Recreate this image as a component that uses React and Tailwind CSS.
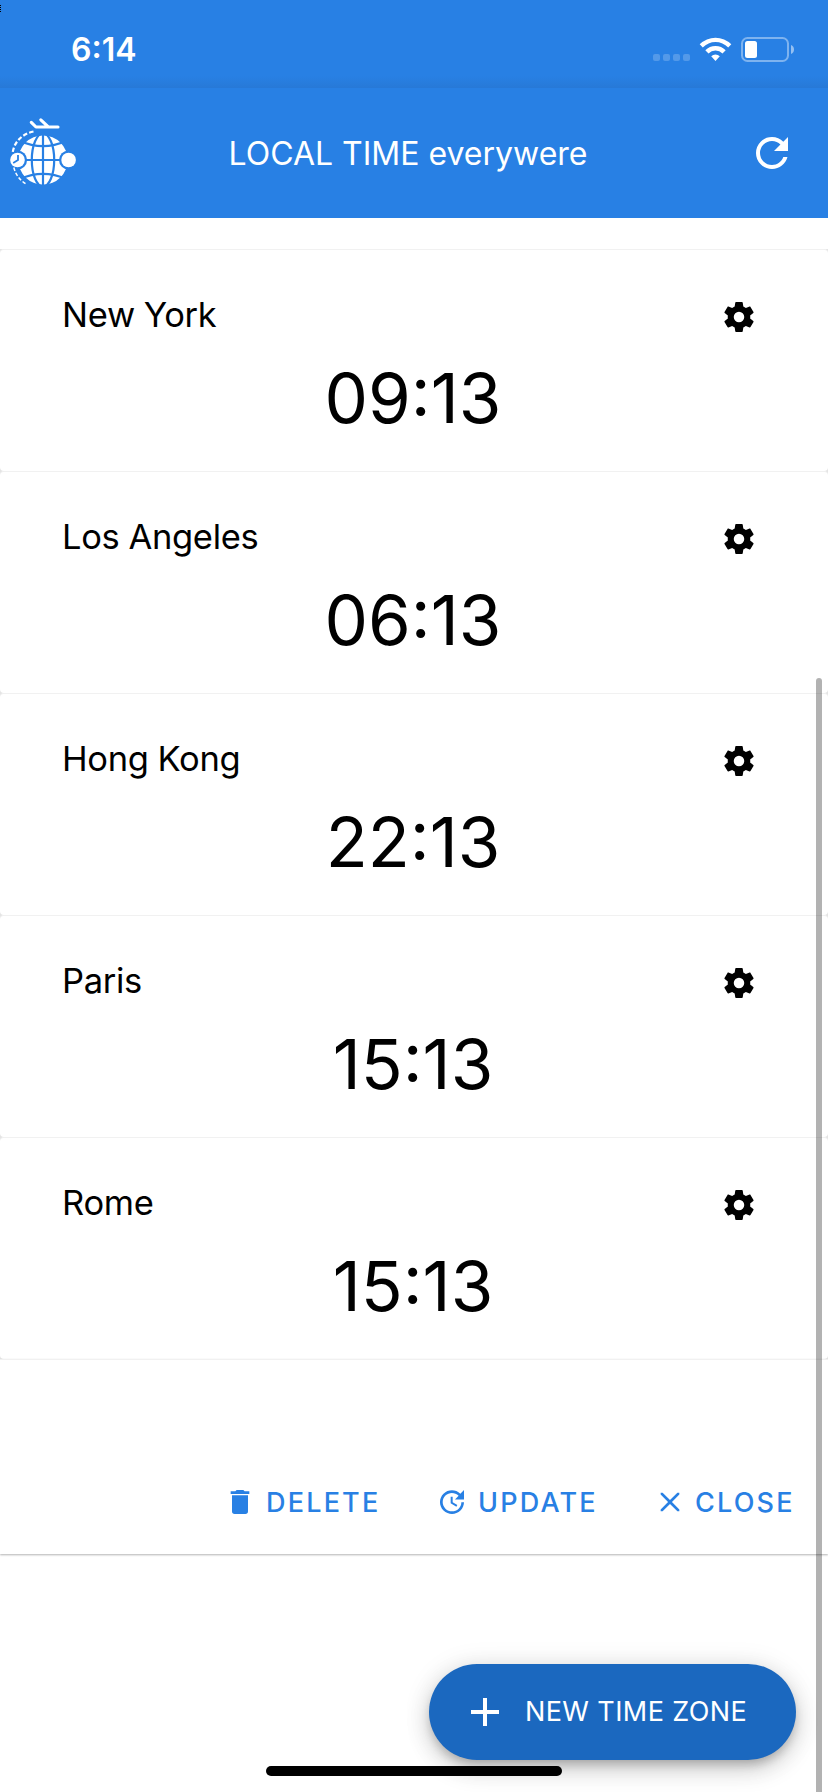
const ICONS = {
  cog: "M12,15.5A3.5,3.5 0 0,1 8.5,12A3.5,3.5 0 0,1 12,8.5A3.5,3.5 0 0,1 15.5,12A3.5,3.5 0 0,1 12,15.5M19.43,12.97C19.47,12.65 19.5,12.33 19.5,12C19.5,11.67 19.47,11.34 19.43,11L21.54,9.37C21.73,9.22 21.78,8.95 21.66,8.73L19.66,5.27C19.54,5.05 19.27,4.96 19.05,5.05L16.56,6.05C16.04,5.66 15.5,5.32 14.87,5.07L14.5,2.42C14.46,2.18 14.25,2 14,2H10C9.75,2 9.54,2.18 9.5,2.42L9.13,5.07C8.5,5.32 7.96,5.66 7.44,6.05L4.95,5.05C4.73,4.96 4.46,5.05 4.34,5.27L2.34,8.73C2.21,8.95 2.27,9.22 2.46,9.37L4.57,11C4.53,11.34 4.5,11.67 4.5,12C4.5,12.33 4.53,12.65 4.57,12.97L2.46,14.63C2.27,14.78 2.21,15.05 2.34,15.27L4.34,18.73C4.46,18.95 4.73,19.03 4.95,18.95L7.44,17.94C7.96,18.34 8.5,18.68 9.13,18.93L9.5,21.58C9.54,21.82 9.75,22 10,22H14C14.25,22 14.46,21.82 14.5,21.58L14.87,18.93C15.5,18.67 16.04,18.34 16.56,17.94L19.05,18.95C19.27,19.03 19.54,18.95 19.66,18.73L21.66,15.27C21.78,15.05 21.73,14.78 21.54,14.63L19.43,12.97Z",
  trash: "M19,4H15.5L14.5,3H9.5L8.5,4H5V6H19M6,19A2,2 0 0,0 8,21H16A2,2 0 0,0 18,19V7H6V19Z",
  update: "M21,10.12H14.22L16.96,7.3C14.23,4.6 9.81,4.5 7.08,7.2C4.35,9.91 4.35,14.28 7.08,17C9.81,19.7 14.23,19.7 16.96,17C18.32,15.65 19,14.08 19,12.1H21C21,14.08 20.12,16.65 18.36,18.39C14.85,21.87 9.15,21.87 5.64,18.39C2.14,14.92 2.11,9.28 5.62,5.81C9.13,2.34 14.76,2.34 18.27,5.81L21,3V10.12M12.5,8V12.25L16,14.33L15.28,15.54L11,13V8H12.5Z",
  close: "M13.46,12L19,17.54V19H17.54L12,13.46L6.46,19H5V17.54L10.54,12L5,6.46V5H6.46L12,10.54L17.54,5H19V6.46L13.46,12Z",
  plus: "M19,13H13V19H11V13H5V11H11V5H13V11H19V13Z",
  refresh: "M17.65,6.35C16.2,4.9 14.21,4 12,4A8,8 0 0,0 4,12A8,8 0 0,0 12,20C15.73,20 18.84,17.45 19.73,14H17.65C16.83,16.33 14.61,18 12,18A6,6 0 0,1 6,12A6,6 0 0,1 12,6C13.66,6 15.14,6.69 16.22,7.78L13,11H20V4L17.65,6.35Z",
};

function Icon({ name, className }) {
  return (
    <svg viewBox="0 0 24 24" fill="currentColor" className={className}>
      <path d={ICONS[name]} />
    </svg>
  );
}

function Logo() {
  return (
    <svg viewBox="8 117 70 72" className="h-[72px] w-[70px]" fill="none">
      <circle cx="43" cy="160" r="24.6" fill="white" />
      <g stroke="#2880e4" strokeWidth="2.2">
        <path d="M43 134V186M18 160H68" />
        <ellipse cx="43" cy="160" rx="11.2" ry="26.5" />
        <path d="M20 141Q43 151.4 66 141M20 179Q43 168.6 66 179" />
      </g>
      <g fill="#2880e4">
        <circle cx="17.5" cy="160" r="9.6" />
        <circle cx="68.6" cy="160" r="9.6" />
      </g>
      <circle cx="17.5" cy="160" r="7.3" fill="white" />
      <circle cx="68.6" cy="160" r="7.3" fill="white" />
      <path d="M18 155V160L13.2 163" stroke="#2880e4" strokeWidth="1.8" />
      <path d="M33.5 131.5C22 134 14 142 12.6 153" stroke="white" strokeWidth="2.2" strokeDasharray="4.4 2.2" />
      <path d="M13.8 167.5C15.6 174 19 179.5 25.5 183.6" stroke="white" strokeWidth="1.5" strokeDasharray="3.6 2" />
      <path d="M31.3 122.3L36 127H58M40.8 119.8L47.8 126.4" stroke="white" strokeWidth="3.1" strokeLinecap="round" strokeLinejoin="round" />
    </svg>
  );
}

function StatusIcons() {
  return (
    <svg viewBox="652 34 144 30" className="h-[30px] w-[144px]" fill="none">
      <g fill="white" fillOpacity="0.2">
        <rect x="653" y="54" width="7" height="7" rx="2" />
        <rect x="663" y="54" width="7" height="7" rx="2" />
        <rect x="673" y="54" width="7" height="7" rx="2" />
        <rect x="683" y="54" width="7" height="7" rx="2" />
      </g>
      <path
        fill="white"
        d="M699.7 44.3A22.2 22.2 0 0 1 731.3 44.3L728.2 47.4A17.8 17.8 0 0 0 702.8 47.4ZM705.3 50.2A14.2 14.2 0 0 1 725.7 50.2L722.5 53.4A9.8 9.8 0 0 0 708.5 53.4ZM711.2 56.3A6.3 6.3 0 0 1 719.8 56.3L715.5 61Z"
      />
      <rect x="742" y="38" width="46" height="23" rx="5.5" stroke="white" strokeOpacity="0.4" strokeWidth="2" />
      <rect x="745" y="41" width="12" height="17" rx="2.5" fill="white" />
      <path d="M791 45V54C795 52.5 795 46.5 791 45Z" fill="white" fillOpacity="0.5" />
    </svg>
  );
}

const ZONES = [
  ["New York", "09:13"],
  ["Los Angeles", "06:13"],
  ["Hong Kong", "22:13"],
  ["Paris", "15:13"],
  ["Rome", "15:13"],
];

function ZoneRow({ city, time }) {
  return (
    <section className="flex h-[222px] flex-col rounded-[4px] border-t border-[#f1f1f1] bg-white">
      <div className="mt-[39px] flex h-[52px] items-center justify-between pr-[71px] pl-[62px]">
        <h2 className="text-[34.5px] leading-[52px] tracking-[-0.3px] [word-spacing:-0.5px]">{city}</h2>
        <Icon name="cog" className="mt-1 size-9" />
      </div>
      <p className="mt-[17px] pr-[2px] text-center text-[69px] leading-[80px]">{time}</p>
    </section>
  );
}

export default function App() {
  return (
    <div className="relative flex h-[1792px] w-[828px] flex-col overflow-hidden bg-white font-['Inter','Liberation_Sans',sans-serif] text-black">
      <div className="flex h-[88px] items-start justify-between bg-[linear-gradient(to_bottom,#2880e4_76px,#2779d7_88px)] pt-[34px] pr-[32px] pl-[71px] text-white">
        <span className="text-[32px] leading-[32px] font-semibold">6:14</span>
        <StatusIcons />
      </div>
      <header className="flex h-[130px] items-center justify-between bg-[#2880e4] pr-[32px] pl-[8px] text-white">
        <Logo />
        <h1 className="mt-[2px] mr-[10px] text-[32px] font-[370]">LOCAL TIME everywere</h1>
        <Icon name="refresh" className="size-12" />
      </header>
      <main className="flex flex-col">
        <div className="mt-[31px] flex flex-col bg-[#e4e4e4]">
          {ZONES.map(([city, time]) => (
            <ZoneRow key={city} city={city} time={time} />
          ))}
        </div>
        <div className="flex h-[195px] flex-col justify-end border-t border-[#f1f1f1] pb-[27px] shadow-[0_1px_2px_rgba(0,0,0,0.3)]">
          <div className="flex h-[50px] items-center pl-[224px] text-[27px] font-medium text-[#2880e4]">
            <button className="flex w-[212px] items-center gap-[10px] tracking-[2.2px]">
              <Icon name="trash" className="size-8 shrink-0" />
              <span className="mt-[2px]">DELETE</span>
            </button>
            <button className="flex w-[218px] items-center gap-[10px] tracking-[2.2px]">
              <Icon name="update" className="size-8 shrink-0" />
              <span className="mt-[2px]">UPDATE</span>
            </button>
            <button className="flex items-center gap-[9px] tracking-[2.2px]">
              <Icon name="close" className="size-8 shrink-0" />
              <span className="mt-[2px]">CLOSE</span>
            </button>
          </div>
        </div>
      </main>
      <button className="absolute top-[1664px] left-[429px] flex h-[96px] w-[367px] items-center rounded-full bg-[#1b68bf] pl-[32px] text-[27px] text-white shadow-[0_6px_10px_-2px_rgba(0,0,0,0.2),0_10px_24px_rgba(0,0,0,0.16),0_2px_28px_rgba(0,0,0,0.1)]">
        <Icon name="plus" className="size-12" />
        <span className="ml-[16px] tracking-[0.4px] whitespace-nowrap">NEW TIME ZONE</span>
      </button>
      <div className="absolute top-[678px] -bottom-2 left-[816px] w-[6px] rounded-full bg-black/30" />
      <div className="absolute top-[1766px] left-[266px] h-[10px] w-[296px] rounded-full bg-black" />
      <div className="absolute top-[5px] left-0 h-[7px] w-px bg-[repeating-linear-gradient(to_bottom,#000_0_1px,transparent_1px_2px)]" />
    </div>
  );
}
